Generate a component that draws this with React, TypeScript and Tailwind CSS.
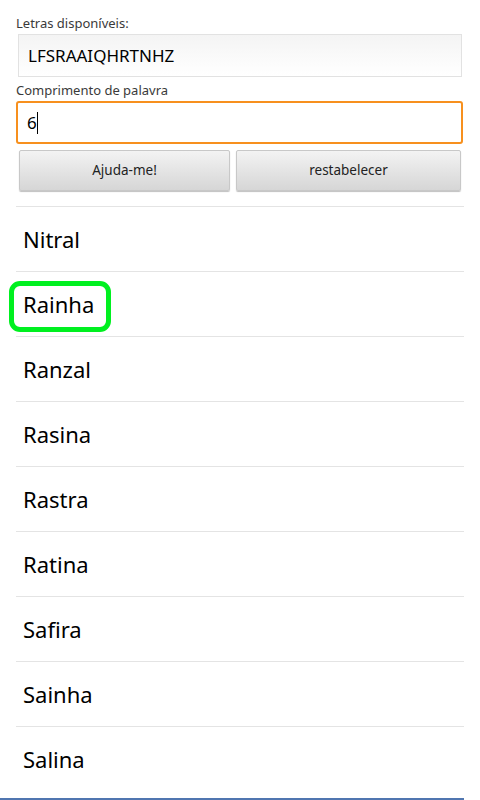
import React from 'react';

const words = ['Nitral', 'Rainha', 'Ranzal', 'Rasina', 'Rastra', 'Ratina', 'Safira', 'Sainha', 'Salina'];

function WordRow({ word, highlighted }: { word: string; highlighted?: boolean }) {
  return (
    <li className="relative h-[65px] border-t border-[#e4e4e4] flex items-center pl-[7px]">
      <span className="text-[22px] text-black leading-none">{word}</span>
      {highlighted && (
        <div className="absolute left-[-7px] top-[9px] w-[102px] h-[51px] rounded-[11px] border-[5px] border-[#00f020]" />
      )}
    </li>
  );
}

export default function App() {
  return (
    <div
      className="w-[480px] h-[800px] bg-white relative overflow-hidden flex flex-col"
      style={{ fontFamily: '"Noto Sans", "Open Sans", sans-serif' }}
    >
      <div className="px-4 pt-[13px]">
        <label className="block text-[13px] leading-[20px] text-[#3a3a3a]">Letras disponíveis:</label>
        <div className="mx-[2px] mt-[1px] h-[43px] border border-[#e2e2e2] bg-gradient-to-b from-[#f4f4f4] to-white flex items-center pl-[9px]">
          <span className="text-[17px] text-black">LFSRAAIQHRTNHZ</span>
        </div>
        <label className="block mt-[3px] text-[13px] leading-[20px] text-[#3a3a3a]">Comprimento de palavra</label>
        <div className="mt-[1px] mr-[1px] h-[43px] border-2 border-[#f7901e] rounded-[3px] bg-white flex items-center pl-[9px]">
          <span className="text-[17px] text-black">6</span>
          <span className="w-px h-[22px] bg-black" />
        </div>
        <div className="flex mt-[6px] ml-[3px] gap-[6px]">
          <button className="w-[211px] h-[41px] rounded-[2px] border border-[#c8c8c8] bg-gradient-to-b from-[#f3f3f3] to-[#d6d6d6] shadow-[0_1px_1px_rgba(0,0,0,0.25)] text-[13.5px] text-[#222]">
            Ajuda-me!
          </button>
          <button className="w-[225px] h-[41px] rounded-[2px] border border-[#c8c8c8] bg-gradient-to-b from-[#f3f3f3] to-[#d6d6d6] shadow-[0_1px_1px_rgba(0,0,0,0.25)] text-[13.5px] text-[#222]">
            restabelecer
          </button>
        </div>
      </div>
      <ul className="mx-4 mt-[15px]">
        {words.map((w) => (
          <WordRow key={w} word={w} highlighted={w === 'Rainha'} />
        ))}
      </ul>
      <div className="absolute left-0 bottom-0 w-[464px] h-[2px] bg-[#5076b0]" />
    </div>
  );
}
